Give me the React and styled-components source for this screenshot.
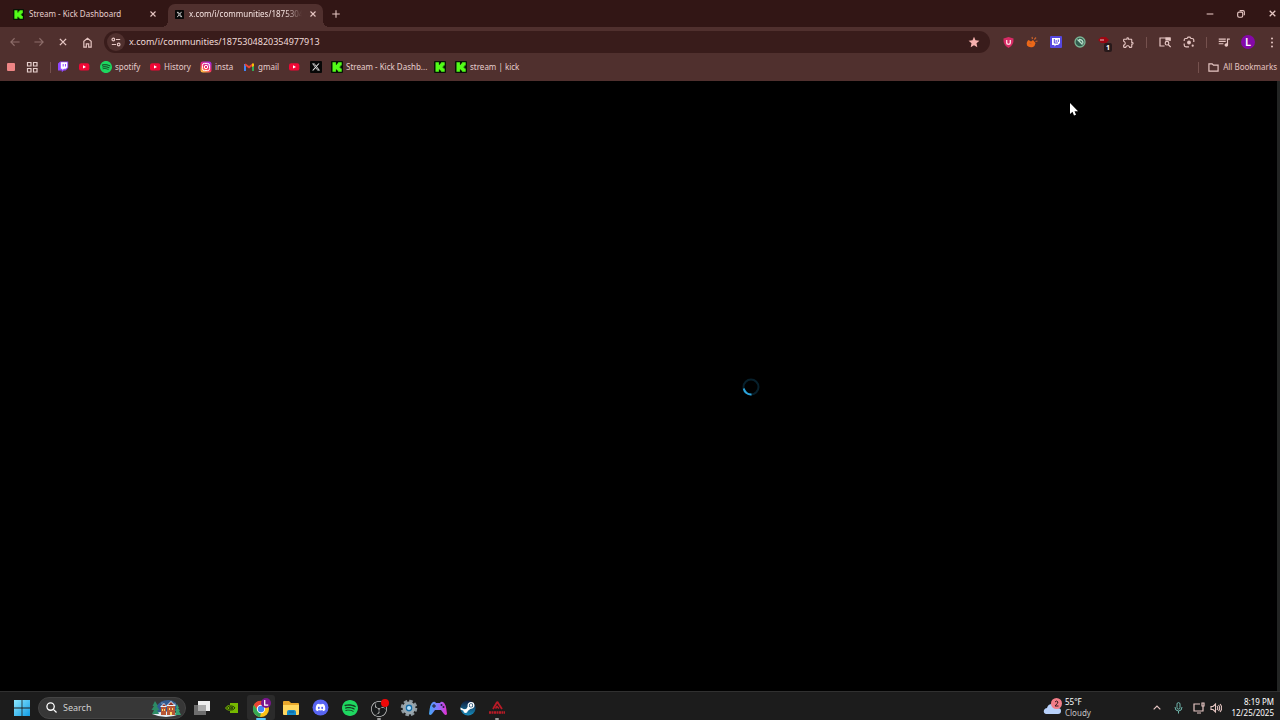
import React from "react";
import styled, { createGlobalStyle, css } from "styled-components";
import { SiSpotify, SiDiscord, SiObsstudio, SiX } from "react-icons/si";
import { MdOutlineExtension, MdQueueMusic } from "react-icons/md";

const Global = createGlobalStyle`
  * { box-sizing: border-box; }
  body { margin: 0; background: #000; font-family: "Noto Sans", "Open Sans", sans-serif; }
  button, input { font: inherit; color: inherit; border: 0; padding: 0; background: none; outline: 0; }
  svg { display: block; flex: none; }
`;

const Window = styled.div`
  display: flex;
  flex-direction: column;
  min-height: 100vh;
  color: #e6cfcd;
  font-size: 9px;
  line-height: 12px;
`;

const TabStrip = styled.header`
  display: flex;
  align-items: stretch;
  height: 27px;
  padding-left: 6px;
  background: #321615;
`;

const Tab = styled.div`
  display: flex;
  align-items: center;
  gap: 5px;
  width: ${(p) => (p.$active ? 155 : 156)}px;
  margin-top: 4px;
  padding: 0 4px 3px 7px;
  ${(p) =>
    p.$active &&
    css`
      position: relative;
      margin-left: 6px;
      border-radius: 7px 7px 0 0;
      background: #50302e;
      color: #f6e3e1;
      &::before, &::after {
        content: "";
        position: absolute;
        bottom: 0;
        width: 6px;
        height: 6px;
      }
      &::before { left: -6px; background: radial-gradient(circle at 0 0, transparent 6px, #50302e 6px); }
      &::after { right: -6px; background: radial-gradient(circle at 100% 0, transparent 6px, #50302e 6px); }
    `}
`;

const TabTitle = styled.span`
  flex: 1;
  overflow: hidden;
  white-space: nowrap;
  font-size: 8px;
  ${(p) => p.$fade && css`mask-image: linear-gradient(90deg, #000 85%, transparent);`}
`;

const IconButton = styled.button`
  position: relative;
  display: flex;
  align-items: center;
  justify-content: center;
  flex: none;
  width: ${(p) => p.$w || 24}px;
  height: ${(p) => p.$h || 22}px;
  color: ${(p) => (p.$dim ? "#8d6d6a" : "#e6c6c3")};
`;

const NewTab = styled(IconButton)`
  margin: 3px auto 0 4px;
`;

const Controls = styled.div`
  display: flex;
`;

const Toolbar = styled.nav`
  display: flex;
  align-items: center;
  height: 30px;
  padding-left: 3px;
  background: #50302e;
`;

const Address = styled.label`
  display: flex;
  align-items: center;
  flex: 1;
  height: 22px;
  margin: 0 6px 0 5px;
  padding: 0 4px 0 3px;
  border-radius: 11px;
  background: #391c1b;
`;

const SiteInfo = styled(IconButton)`
  width: 18px;
  height: 18px;
  margin-right: 4px;
  border-radius: 50%;
  background: #50302e;
`;

const UrlInput = styled.input`
  flex: 1;
  min-width: 0;
  color: #f0dad8;
`;

const Divider = styled.span`
  flex: none;
  width: 1px;
  height: 11px;
  margin: 0 ${(p) => p.$gap || 6}px;
  background: #75514e;
`;

const Badge = styled.span`
  position: absolute;
  left: 12px;
  top: 12px;
  width: 8px;
  height: 9px;
  border-radius: 2px;
  background: #27191a;
  color: #fff;
  font-size: 7px;
  font-weight: 700;
  line-height: 9px;
  text-align: center;
`;

const Avatar = styled.span`
  width: 14px;
  height: 14px;
  border-radius: 50%;
  background: #8508a8;
  color: #fff;
  font-size: 11px;
  font-weight: 600;
  line-height: 14px;
  text-align: center;
`;

const Bookmarks = styled.nav`
  display: flex;
  align-items: center;
  height: 24px;
  padding: 0 3px 4px 5px;
  background: #50302e;
`;

const Bookmark = styled.a`
  display: flex;
  align-items: center;
  gap: 3px;
  flex: none;
  width: ${(p) => p.$w || 21}px;
  color: inherit;
  text-decoration: none;
  white-space: nowrap;
  font-size: 8px;
`;

const AllBookmarks = styled(IconButton)`
  width: auto;
  height: 20px;
  gap: 4px;
  font-size: 8px;
  white-space: nowrap;
`;

const Spacer = styled.span`
  flex: 1;
`;

const Page = styled.main`
  display: flex;
  flex: 1;
  align-items: center;
  justify-content: center;
  padding: 2px 0 0 225px;
  border-right: 3px solid #222423;
  background: #000;
`;

const Cursor = styled.svg`
  position: absolute;
  left: 1069px;
  top: 102px;
`;

const Taskbar = styled.footer`
  display: flex;
  align-items: center;
  height: 29px;
  padding: 3px 6px 0 8px;
  border-top: 1px solid #303030;
  background: #1c1c1c;
  color: #fff;
`;

const Search = styled.label`
  display: flex;
  align-items: center;
  gap: 6px;
  width: 148px;
  height: 22px;
  margin: 0 2px;
  padding: 0 4px 0 7px;
  border: 1px solid #444;
  border-radius: 11px;
  background: #373737;
`;

const SearchInput = styled.input`
  flex: 1;
  min-width: 0;
  &::placeholder { color: #d0d0d0; opacity: 1; }
`;

const Apps = styled.div`
  display: flex;
  justify-content: space-between;
  flex: none;
  width: 323px;
`;

const AppButton = styled.button`
  position: relative;
  display: flex;
  align-items: center;
  justify-content: center;
  width: 28px;
  height: 25px;
  border-radius: 3px;
  background: ${(p) => (p.$active ? "#2b2b2b" : "none")};
  &::after {
    content: "";
    position: absolute;
    bottom: 0;
    width: ${(p) => (p.$active ? 10 : p.$running ? 4 : 0)}px;
    height: 2px;
    border-radius: 1px;
    background: ${(p) => (p.$active ? "#58c7f5" : "#9a9a9a")};
  }
`;

const Weather = styled.button`
  display: flex;
  align-items: center;
  gap: 2px;
  width: 102px;
  margin-right: 1px;
  padding-bottom: 2px;
  font-size: 8px;
  line-height: 11px;
  text-align: left;
  span { color: #c4c4c4; }
`;

const Clock = styled.button`
  width: 51px;
  padding-bottom: 2px;
  font-size: 8px;
  line-height: 11px;
  text-align: right;
  white-space: nowrap;
`;

const Line = ({ size = 12, w = 1.3, box = 12, children }) => (
  <svg width={size} height={size} viewBox={`0 0 ${box} ${box}`} fill="none" stroke="currentColor" strokeWidth={w}>
    {children}
  </svg>
);

const Kick = ({ size = 12 }) => (
  <svg width={size} height={size} viewBox="0 0 12 12">
    <rect width="12" height="12" rx="1" fill="#071305" />
    <path fill="#53fc18" d="M1.5 1.3h3.4v2.4h1V2.5h1.2V1.3h3.6v3.3H9.5v1.2h-1v.6h1v1.1h1.2v3.2H7.1V9.6H5.9V8.4h-1v2.3H1.5z" />
  </svg>
);

const XIcon = ({ size = 12 }) => (
  <svg width={size} height={size} viewBox="0 0 12 12">
    <rect width="12" height="12" rx="1" fill="#070707" />
    <g transform="translate(2 2)"><SiX size={8} color="#eee" /></g>
  </svg>
);

const Youtube = () => (
  <svg width="12" height="12" viewBox="0 0 12 12">
    <rect x="1" y="2.2" width="10.4" height="7.4" rx="2.2" fill="#f00735" />
    <path d="M5 4.3 8 5.9 5 7.5z" fill="#fff" />
  </svg>
);

const Twitch = () => (
  <svg width="12" height="12" viewBox="0 0 12 12">
    <path d="M3.2.4h8v6.3L8.6 9.4H6.7L4.8 11.3V9.4H1V2.6z" fill="#9146ff" />
    <path d="M3.8 1.3h6.5v5L8.8 7.8H6.9L5.4 9.2V7.8H3.8z" fill="#fff" />
    <path d="M6.2 3v2.5M8.5 3v2.5" stroke="#9146ff" />
  </svg>
);

const Spotify = ({ size = 12 }) => (
  <svg width={size} height={size} viewBox="0 0 12 12">
    <circle cx="6" cy="6" r="5.5" fill="#163d21" />
    <SiSpotify size={12} color="#1ed760" />
  </svg>
);

const Instagram = () => (
  <svg width="12" height="12" viewBox="0 0 12 12">
    <defs>
      <linearGradient id="ig" x1=".2" y1="1" x2=".8" y2="0">
        <stop stopColor="#ffc83d" /><stop offset=".45" stopColor="#f52a62" /><stop offset="1" stopColor="#a22be8" />
      </linearGradient>
    </defs>
    <rect x=".5" y=".5" width="11" height="11" rx="2.5" fill="url(#ig)" />
    <g fill="none" stroke="#fff"><rect x="2.4" y="2.4" width="7.2" height="7.2" rx="2" /><circle cx="6" cy="6" r="1.7" /></g>
    <circle cx="8.2" cy="3.9" r=".5" fill="#fff" />
  </svg>
);

const Gmail = () => (
  <svg width="12" height="12" viewBox="0 0 12 12" fill="none" strokeWidth="2">
    <path d="M2 10V3" stroke="#4285f4" /><path d="M10 10V3" stroke="#34a853" />
    <path d="M2 3.2 6 6.3l4-3.1" stroke="#ea4335" /><path d="M9 4V2.6h2V5L9 6z" fill="#fbbc04" stroke="none" />
  </svg>
);

const Close = ({ size = 8 }) => <Line size={size} box={8} w={1.1}><path d="m1.5 1.5 5 5m0-5-5 5" /></Line>;

const Windows = () => (
  <svg width="16" height="16" viewBox="0 0 16 16">
    <defs><linearGradient id="win" x2="1" y2="1"><stop stopColor="#8de8ff" /><stop offset="1" stopColor="#119be4" /></linearGradient></defs>
    <path fill="url(#win)" d="M0 0h7.6v7.6H0zM8.4 0H16v7.6H8.4zM0 8.4h7.6V16H0zM8.4 8.4H16V16H8.4z" />
  </svg>
);

const Village = () => (
  <svg width="30" height="18" viewBox="0 0 30 18">
    <path d="M5 8Q9 1 17 1q9 0 10 9l-5 4H6z" fill="#315a91" />
    <path d="M1 15q14-5 28 0-7 3-14 3T1 15z" fill="#e5eef5" />
    <path d="m4 2 3 5H5.8l2.5 4H6l2 4H1l2-4H.5L3 7H1.5z" fill="#2d8b65" />
    <path d="m26 5 2 4h-1l2 3h-1l2 4h-6l1-4h-1l2-3h-1z" fill="#36a072" />
    <path d="M10 8h5v8h-5zM16 7h8v9h-8z" fill="#b75735" />
    <path d="m9 8 4-4 3 4zm6-1 5-5 5 5z" fill="#e7f4ff" /><path d="m11 7 2-2 2 2zm6-1 3-3 3 3z" fill="#8f352d" />
    <path d="M11 10h1v2h-1zm2 0h1v2h-1zm5-1h1v2h-1zm3 0h1v2h-1zm-2 4h2v3h-2z" fill="#ffd668" />
    <circle cx="11" cy="4" r=".5" fill="#fff" /><circle cx="24" cy="5" r=".5" fill="#fff" />
  </svg>
);

const Chrome = () => (
  <svg width="20" height="20" viewBox="0 0 20 20">
    <circle cx="10" cy="11" r="8" fill="#fbc116" />
    <path d="M3 7a8 8 0 0 1 14 0h-7l-3 6z" fill="#ea4335" />
    <path d="M3 7 7 13l3 2-1 4A8 8 0 0 1 3 7z" fill="#34a853" />
    <circle cx="10" cy="11" r="4.200" fill="#fff" /><circle cx="10" cy="11" r="3.200" fill="#4285f4" />
    <circle cx="15" cy="5" r="5" fill="#7b168f" /><path d="M13.700 2v5.200h3.500" fill="none" stroke="#fff" strokeWidth="1.300" />
  </svg>
);

const Folder = () => (
  <svg width="18" height="16" viewBox="0 0 18 16">
    <path d="M1 2q0-1 1-1h5l2 2h7q1 0 1 1v10H1z" fill="#e8a72b" /><path d="M1 5h16v9q0 1-1 1H2q-1 0-1-1z" fill="#ffd75f" />
    <path d="M5 15v-3q0-2 2-2h5q2 0 2 2v3z" fill="#168cca" /><path d="M7 12h5" stroke="#075c96" />
  </svg>
);

const Discord = () => (
  <svg width="17" height="17" viewBox="0 0 17 17"><circle cx="8.500" cy="8.500" r="8" fill="#5865f2" /><g transform="translate(3.500 3.500)"><SiDiscord size={10} color="#fff" /></g></svg>
);

const Obs = () => (
  <svg width="20" height="20" viewBox="0 0 20 20">
    <circle cx="10" cy="11" r="8" fill="#17191a" /><g transform="translate(2 3)"><SiObsstudio size={16} color="#c9c9c9" /></g>
    <circle cx="16" cy="5" r="4" fill="#ee0808" />
  </svg>
);

const Gear = () => (
  <svg width="18" height="18" viewBox="0 0 18 18">
    <circle cx="9" cy="9" r="7" fill="none" stroke="#8e999f" strokeWidth="2.600" strokeDasharray="3.500 2" />
    <circle cx="9" cy="9" r="5" fill="#b8c4cb" stroke="#9aa7ae" strokeWidth="2.800" /><circle cx="9" cy="9" r="3.400" fill="#176da7" /><circle cx="9" cy="9" r="2" fill="#b8e3ff" />
  </svg>
);

const Gamepad = () => (
  <svg width="18" height="16" viewBox="0 0 18 16">
    <defs><linearGradient id="pad"><stop stopColor="#43a6f5" /><stop offset=".5" stopColor="#8576ff" /><stop offset="1" stopColor="#e62dce" /></linearGradient></defs>
    <path d="M4 2q2-1 3 1h4q1-2 3-1 3 1 4 12-1 2-3 0l-3-4H6l-3 4q-2 2-3 0Q1 3 4 2z" fill="url(#pad)" />
    <path d="M5 4v4M3 6h4" stroke="#1c1c2c" /><circle cx="12.500" cy="5" r="1" fill="#202040" /><circle cx="14.500" cy="7" r="1" fill="#202040" />
  </svg>
);

const Steam = () => (
  <svg width="16" height="16" viewBox="0 0 16 16">
    <defs><linearGradient id="steam" x2="0" y2="1"><stop stopColor="#101b3b" /><stop offset="1" stopColor="#168bbb" /></linearGradient></defs>
    <circle cx="8" cy="8" r="7.600" fill="url(#steam)" />
    <path d="m.5 7.500 5 2.500 3-4.500 3 2.500-5 4-6-2.500z" fill="#fff" /><circle cx="11" cy="5.400" r="2.800" fill="#184469" stroke="#fff" strokeWidth="1.300" /><circle cx="11" cy="5.400" r="1.300" fill="#fff" /><circle cx="5.500" cy="11" r="2.100" fill="#fff" />
  </svg>
);

const RedApp = () => (
  <svg width="18" height="16" viewBox="0 0 18 16" fill="none" stroke="#b91b27">
    <path d="m5 9 3.500-6q1-1.500 1.500 0l4 6" strokeWidth="1.800" /><path d="M7.500 8.500 9 6.500l2 2" strokeWidth="1.600" /><path d="M1 12.500h16" strokeWidth="2.600" strokeDasharray="2 .5" />
  </svg>
);

const Nvidia = () => (
  <svg width="13" height="10" viewBox="0 0 13 10">
    <path d="M5 0h8v10H5z" fill="#76b900" /><path d="M0 5q3-4 7-3t4 3Q9 8 6 8 2 8 0 5z" fill="#76b900" />
    <path d="M1.500 5Q4 2 7 3t3 2Q8 7.500 5.500 7 3 7 1.500 5zM4 5q1.500-2 4 0-2 2-4 0" fill="none" stroke="#1b2b08" strokeWidth=".9" />
  </svg>
);

export default function App() {
  return (
    <Window>
      <Global />
      <TabStrip>
        <Tab>
          <Kick size={11} />
          <TabTitle>Stream - Kick Dashboard</TabTitle>
          <IconButton $w={10} $h={12} aria-label="Close tab"><Close /></IconButton>
        </Tab>
        <Tab $active>
          <XIcon size={9} />
          <TabTitle $fade>x.com/i/communities/1875304820354977913</TabTitle>
          <IconButton $w={12} $h={12} aria-label="Close tab"><Close /></IconButton>
        </Tab>
        <NewTab $w={18} aria-label="New tab"><Line size={10} w={1.3}><path d="M6 1.500v9M1.500 6h9" /></Line></NewTab>
        <Controls>
          <IconButton $w={31} $h={27} aria-label="Minimize"><Line size={8}><path d="M1 6h10" strokeWidth="1.600" /></Line></IconButton>
          <IconButton $w={31} $h={27} aria-label="Restore"><Line size={8} w={1.7}><rect x="1" y="3.200" width="7.600" height="7.600" rx="2" /><path d="M4 1h5q2 0 2 2v5" /></Line></IconButton>
          <IconButton $w={31} $h={27} aria-label="Close window" as={CloseWindow}><Close size={9} /></IconButton>
        </Controls>
      </TabStrip>

      <Toolbar>
        <IconButton $dim aria-label="Back"><Line size={10}><path d="M11.500 6H1m4.500-4.500L1 6l4.500 4.500" /></Line></IconButton>
        <IconButton $dim aria-label="Forward"><Line size={10}><path d="M.5 6H11M6.500 1.500 11 6l-4.500 4.500" /></Line></IconButton>
        <IconButton aria-label="Stop"><Close size={10} /></IconButton>
        <IconButton aria-label="Home"><Line size={11} w={1.3}><path d="M2 11V4.700L6 1.500l4 3.200V11H7.300V7.500H4.700V11z" /></Line></IconButton>
        <Address>
          <SiteInfo as="span"><Line size={10} w={1.4}><circle cx="2.800" cy="3" r="1.600" /><path d="M6 3h5M1 9h5" /><circle cx="9.200" cy="9" r="1.600" /></Line></SiteInfo>
          <UrlInput aria-label="Address" defaultValue="x.com/i/communities/1875304820354977913" />
          <IconButton aria-label="Edit bookmark"><svg width="12" height="12" viewBox="0 0 12 12"><path fill="#f7b1ae" d="m6 .8 1.500 3.500 3.900.4-2.900 2.600.8 3.900L6 9.200l-3.300 2 .8-3.900L.6 4.700l3.900-.4z" /></svg></IconButton>
        </Address>
        <IconButton aria-label="Shield extension"><svg width="11" height="11" viewBox="0 0 12 12"><path d="m6 0 5.500 1.500Q12 9 6 12 0 9 .5 1.500z" fill="#d72b65" /><path d="M4 3.200V6q0 2 2 2t2-2V3.200" stroke="#ffd6de" strokeWidth="1.500" fill="none" /></svg></IconButton>
        <IconButton aria-label="Clap extension"><svg width="12" height="12" viewBox="0 0 12 12"><path d="m1.500 5 1-1L5 5.500 7 4l2.500 3Q9 10 7 11q-4 1-6-1.500Q0 7 1.500 5z" fill="#ed6818" /><path d="M6.500 3 6 1M8.300 3.500 10 1.500M9.500 5.500l2-.5M3 7l2.500 1" stroke="#c9602a" strokeWidth="1.200" /></svg></IconButton>
        <IconButton aria-label="Twitch extension"><svg width="12" height="12" viewBox="0 0 12 12"><rect width="12" height="12" rx="1" fill="#5647df" /><path d="M2 2h8v5L8 9H6l-1.500 1.500V9H2z" fill="#fff" /><path d="M4.300 3v4H8M6.200 4v2M8.300 3.500V6" stroke="#5647df" fill="none" /></svg></IconButton>
        <IconButton aria-label="Green extension"><svg width="12" height="12" viewBox="0 0 12 12"><circle cx="6" cy="6" r="5" fill="#325c4d" stroke="#7bb494" strokeWidth="1.300" /><path d="m3.500 3.500 5 5M5 3.500q4 0 4 4" stroke="#b8dfca" fill="none" strokeWidth="1.300" /></svg></IconButton>
        <IconButton aria-label="Red extension, 1 notification"><svg width="12" height="12" viewBox="0 0 12 12"><path d="m0 4 3-3h5l3 3-3 3H3z" fill="#9c0712" /><path d="M2 4h4" stroke="#e8bfc2" /></svg><Badge>1</Badge></IconButton>
        <IconButton aria-label="Extensions"><MdOutlineExtension size={13} /></IconButton>
        <Divider />
        <IconButton aria-label="Search tabs"><Line size={12} w={1.2}><path d="M5.500 10H1V2h10v3" /><path d="M7 2h4v2H7z" fill="currentColor" /><circle cx="8" cy="7.200" r="1.800" /><path d="m9.200 8.500 2.500 2.500" /></Line></IconButton>
        <IconButton aria-label="Search with Lens"><Line size={12} w={1.2}><path d="M1.200 5V4q0-1.500 1.500-1.500H4L5 1.200h2l1 1.300h1q1.800 0 1.800 1.500v2M1.200 7.500V9q0 1.800 1.800 1.800h3" /><circle cx="6" cy="6.500" r="1.300" fill="currentColor" /><circle cx="9.700" cy="9.700" r=".5" /></Line></IconButton>
        <Divider $gap={5} />
        <IconButton aria-label="Media controls"><MdQueueMusic size={14} /></IconButton>
        <IconButton aria-label="Profile"><Avatar>L</Avatar></IconButton>
        <Menu aria-label="Menu"><svg width="4" height="11" viewBox="0 0 4 11" fill="currentColor"><circle cx="2" cy="1.500" r="1" /><circle cx="2" cy="5.500" r="1" /><circle cx="2" cy="9.500" r="1" /></svg></Menu>
      </Toolbar>

      <Bookmarks>
        <Bookmark href="#" aria-label="Saved group"><svg width="12" height="12"><rect x="2" y="2" width="8" height="8" rx="1" fill="#ee8585" /></svg></Bookmark>
        <Bookmark href="#" aria-label="Apps" $w={18}><Line w={1.2}><path d="M1.500 1.500H5V5H1.500zM7.500 1.500H11V5H7.500zM1.500 7.500H5V11H1.500zM7.500 7.500H11V11H7.500z" /></Line></Bookmark>
        <Divider />
        <Bookmark href="#" aria-label="Twitch"><Twitch /></Bookmark>
        <Bookmark href="#" aria-label="YouTube" $w={22}><Youtube /></Bookmark>
        <Bookmark href="#" $w={49}><Spotify />spotify</Bookmark>
        <Bookmark href="#" $w={51}><Youtube />History</Bookmark>
        <Bookmark href="#" $w={43}><Instagram />insta</Bookmark>
        <Bookmark href="#" $w={45}><Gmail />gmail</Bookmark>
        <Bookmark href="#" aria-label="YouTube" $w={22}><Youtube /></Bookmark>
        <Bookmark href="#" aria-label="X"><XIcon /></Bookmark>
        <Bookmark href="#" $w={103}><Kick />Stream - Kick Dashb...</Bookmark>
        <Bookmark href="#" aria-label="Kick"><Kick /></Bookmark>
        <Bookmark href="#" $w={62}><Kick />stream | kick</Bookmark>
        <Spacer />
        <Divider $gap={9} />
        <AllBookmarks><Line size={11}><path d="M1 2h3.500L6 3.500h5V10H1z" /></Line>All Bookmarks</AllBookmarks>
      </Bookmarks>

      <Page>
        <svg width="18" height="18" viewBox="0 0 18 18" fill="none" strokeWidth="2" role="img" aria-label="Loading">
          <circle cx="9" cy="9" r="7.500" stroke="#07202c" />
          <path d="M1.700 10.500A7.500 7.500 0 0 0 9.500 16.500" stroke="#2ba4dc" />
        </svg>
      </Page>
      <Cursor width="9" height="14" viewBox="0 0 9 14"><path d="M1 1v11l2.500-2.300L5 13.500l2-.8-1.500-3.500H9z" fill="#fff" /></Cursor>

      <Taskbar>
        <AppButton aria-label="Start"><Windows /></AppButton>
        <Search>
          <Line size={11} w={1.4}><circle cx="5" cy="5" r="4" /><path d="m8 8 3.500 3.500" /></Line>
          <SearchInput type="text" aria-label="Search" placeholder="Search" />
          <Village />
        </Search>
        <Apps>
          <AppButton aria-label="Task view"><svg width="16" height="14" viewBox="0 0 16 14"><path d="M4 0h12v10H4z" fill="#eee" /><path d="M0 4h12v10H0z" fill="#777" opacity=".9" /><path d="M4 4h8v6H4z" fill="#aaa" /></svg></AppButton>
          <AppButton aria-label="NVIDIA"><Nvidia /></AppButton>
          <AppButton $active aria-label="Chrome"><Chrome /></AppButton>
          <AppButton aria-label="File Explorer"><Folder /></AppButton>
          <AppButton aria-label="Discord"><Discord /></AppButton>
          <AppButton aria-label="Spotify"><Spotify size={16} /></AppButton>
          <AppButton $running aria-label="OBS Studio"><Obs /></AppButton>
          <AppButton aria-label="Settings"><Gear /></AppButton>
          <AppButton aria-label="Controller"><Gamepad /></AppButton>
          <AppButton aria-label="Steam"><Steam /></AppButton>
          <AppButton $running aria-label="Red app"><RedApp /></AppButton>
        </Apps>
        <Spacer />
        <Weather>
          <svg width="20" height="18" viewBox="0 0 20 18"><path d="M3 16q-3-1-2-4 1-2 3-2 1-4 5-4 5 0 6 4 3 0 3 3t-3 3z" fill="#b8d1fa" /><circle cx="13.500" cy="5.500" r="5.500" fill="#f27d88" /><path d="M12 4q1.500-2 3 0 0 1-3 4h3.500" fill="none" stroke="#351b20" /></svg>
          <div>55°F<br /><span>Cloudy</span></div>
        </Weather>
        <IconButton $w={22} aria-label="Show hidden icons"><Line size={8} w={1.8}><path d="m1 8 5-5 5 5" /></Line></IconButton>
        <IconButton $w={21} aria-label="Microphone"><svg width="9" height="12" viewBox="0 0 9 12" fill="none" stroke="#70b7ad"><rect x="3" y=".6" width="3" height="6.500" rx="1.500" /><path d="M1 5q0 4 3.500 4T8 5M4.500 9v2.500" /></svg></IconButton>
        <IconButton $w={20} aria-label="Network"><Line size={12} w={1.2}><path d="M7 2H1v7h9V7M4 11h4M9 1h2v3H9zM10 4v4" /></Line></IconButton>
        <IconButton $w={14} aria-label="Volume"><Line size={12} w={1.1}><path d="M1 4.500h2L5.500 2v8L3 7.500H1zM7 4q1.500 2 0 4M8.500 3q2.500 3 0 6M10 2q3.500 4 0 8" /></Line></IconButton>
        <Clock>8:19 PM<br />12/25/2025</Clock>
      </Taskbar>
    </Window>
  );
}

const Menu = styled(IconButton)`
  width: 16px;
  margin-left: 4px;
`;

const CloseWindow = styled.button`
  width: 16px;
  margin-left: 8px;
`;
